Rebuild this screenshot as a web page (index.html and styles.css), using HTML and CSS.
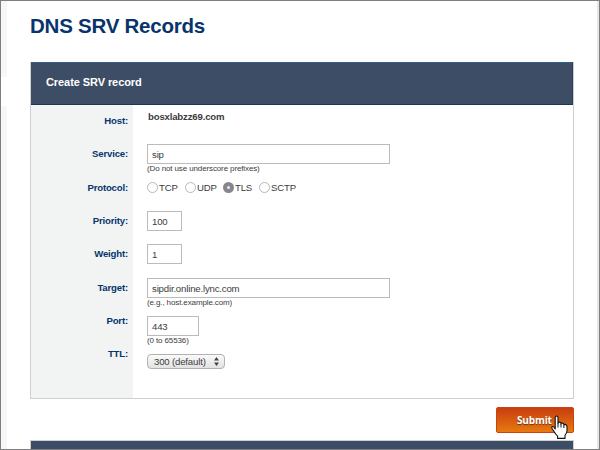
FILE: index.html
```html
<!DOCTYPE html>
<html lang="en">
<head>
<meta charset="utf-8">
<title>DNS SRV Records</title>
<link rel="stylesheet" href="styles.css">
</head>
<body>
<div class="window">
  <aside class="rail"><div class="rail-top"></div><div class="rail-bottom"></div></aside>
  <main class="page">
    <h1>DNS SRV Records</h1>
    <form class="panel">
      <h2>Create SRV record</h2>
      <div class="fields">
        <label>Host:</label><div class="value host">bosxlabzz69.com</div>
        <label>Service:</label><div class="value"><div class="box wide">sip</div><small>(Do not use underscore prefixes)</small></div>
        <label>Protocol:</label>
        <div class="value radios">
          <span class="option tcp"><i class="radio"></i>TCP</span>
          <span class="option udp"><i class="radio"></i>UDP</span>
          <span class="option tls"><i class="radio checked"></i>TLS</span>
          <span class="option"><i class="radio"></i>SCTP</span>
        </div>
        <label>Priority:</label><div class="value"><div class="box short">100</div></div>
        <label>Weight:</label><div class="value"><div class="box short">1</div></div>
        <label>Target:</label><div class="value"><div class="box wide">sipdir.online.lync.com</div><small>(e.g., host.example.com)</small></div>
        <label>Port:</label><div class="value port"><div class="box medium">443</div><small>(0 to 65536)</small></div>
        <label>TTL:</label>
        <div class="value ttl"><div class="select">300 (default)<svg width="5" height="9" viewBox="0 0 5 9"><path d="M0 3.6 2.5 0 5 3.6ZM0 5.4H5L2.5 9Z" fill="#444"/></svg></div></div>
      </div>
    </form>
    <div class="actions">
      <div class="submit">Submit
        <svg class="cursor" width="18" height="25" viewBox="0 0 18 25"><path d="M4.2 14V2.8Q4.2 1 5.6 1T7 2.8V8.2Q7.2 6.9 8.6 7.1T10 8.5V9Q10.3 7.9 11.5 8.1T12.9 9.5V10Q13.2 9.2 14.3 9.4T16 11.2V16Q15.8 18.4 14 20.3V23.4H6.6V21.2Q4.5 19.2 3.2 16.7L1.2 13.7Q.4 12.1 1.3 11.6 2.5 11 4.2 14Z" fill="#fff" stroke="#111" stroke-width="1.1" stroke-linejoin="round"/><path d="M7 8V12.5M10 9V12.5M12.9 10V13" fill="none" stroke="#111"/></svg>
      </div>
    </div>
    <div class="next-panel"></div>
  </main>
  <div class="edge"></div>
</div>
</body>
</html>
```
FILE: styles.css
```css
* { box-sizing: border-box; }
body {
  margin: 0;
  font-family: "Liberation Sans", Arial, sans-serif;
  font-size: 9.6px;
  letter-spacing: -.17px;
  color: #3c3c3c;
}
.window {
  display: flex;
  width: 600px;
  height: 450px;
  border: 1px solid #7f7f7f;
  background: #fff;
  overflow: hidden;
}
.rail { display: flex; flex-direction: column; gap: 29px; width: 6px; }
.rail-top { height: 76px; background: #f7f7f7; }
.rail-bottom { flex: 1; background: #f7f7f7; }
.edge { width: 2px; background: #e6e6e6; }
.page { flex: 1; padding: 0 23px; }
h1 {
  height: 61px;
  margin: 0;
  padding: 13px 0 0;
  font-size: 20.5px;
  letter-spacing: -.24px;
  line-height: 24px;
  color: #07346b;
  white-space: nowrap;
}
.panel {
  width: 544px;
  height: 337px;
  border: 1px solid #ccd0d0;
  border-top: 0;
}
h2 {
  height: 43px;
  margin: 0;
  padding-left: 15px;
  border-top: 1px solid #2e6189;
  border-right: 1px solid #2c3c59;
  border-bottom: 1px solid #243455;
  background: #3e4d66;
  color: #fff;
  font-size: 11px;
  letter-spacing: -.08px;
  line-height: 39px;
}
.fields {
  display: grid;
  grid-template-columns: 102px 1fr;
  grid-template-rows: 33px 34px 33px 33px 34px 33px 33px 1fr;
  height: 293px;
  background: linear-gradient(90deg, #f2f4f4 102px, #fff 102px);
}
label {
  padding: 10px 5px 0 0;
  text-align: right;
  font-weight: bold;
  line-height: 12px;
  color: #07346b;
}
.value { padding: 6px 0 0 14px; }
.host { padding: 6px 0 0 15px; font-weight: bold; line-height: 12px; }
.box {
  height: 20px;
  padding-left: 4px;
  border: 1px solid #bbb;
  line-height: 19px;
}
.wide { width: 243px; }
.short { width: 35px; }
.medium { width: 52px; }
small { display: block; font-size: 8px; letter-spacing: -.12px; line-height: 9px; }
.radios { display: flex; padding-top: 10px; }
.option { display: flex; align-items: center; gap: 1px; height: 11px; }
.tcp, .udp { width: 38px; }
.tls { width: 36px; }
.radio {
  width: 11px;
  height: 11px;
  border: 1px solid #b8b8b8;
  border-radius: 50%;
  background: #fff;
}
.checked { border: 4px solid #85878c; background: #eee; }
.port { padding-top: 11px; }
.ttl { padding-top: 16px; }
.select {
  display: flex;
  align-items: center;
  justify-content: space-between;
  width: 78px;
  height: 15px;
  padding: 0 5px 0 6px;
  border: 1px solid #b2b2b2;
  border-radius: 4px;
  background: linear-gradient(#fafafa, #e2e2e2);
}
.actions {
  display: flex;
  justify-content: flex-end;
  width: 544px;
  height: 41px;
  padding-top: 8px;
}
.submit {
  position: relative;
  width: 78px;
  height: 26px;
  padding-left: 20px;
  border: 1px solid #c94410;
  border-radius: 2px;
  background: linear-gradient(#c73e10, #e8790f);
  color: #fff;
  font: bold 10px/24px "Open Sans", sans-serif;
  letter-spacing: -.15px;
  text-shadow: 0 1px 1px #6b3010;
}
.cursor { position: absolute; left: 54px; top: 7px; }
.next-panel {
  width: 544px;
  height: 10px;
  border: 1px solid #ccd0d0;
  background: #3e4d66;
}
```
